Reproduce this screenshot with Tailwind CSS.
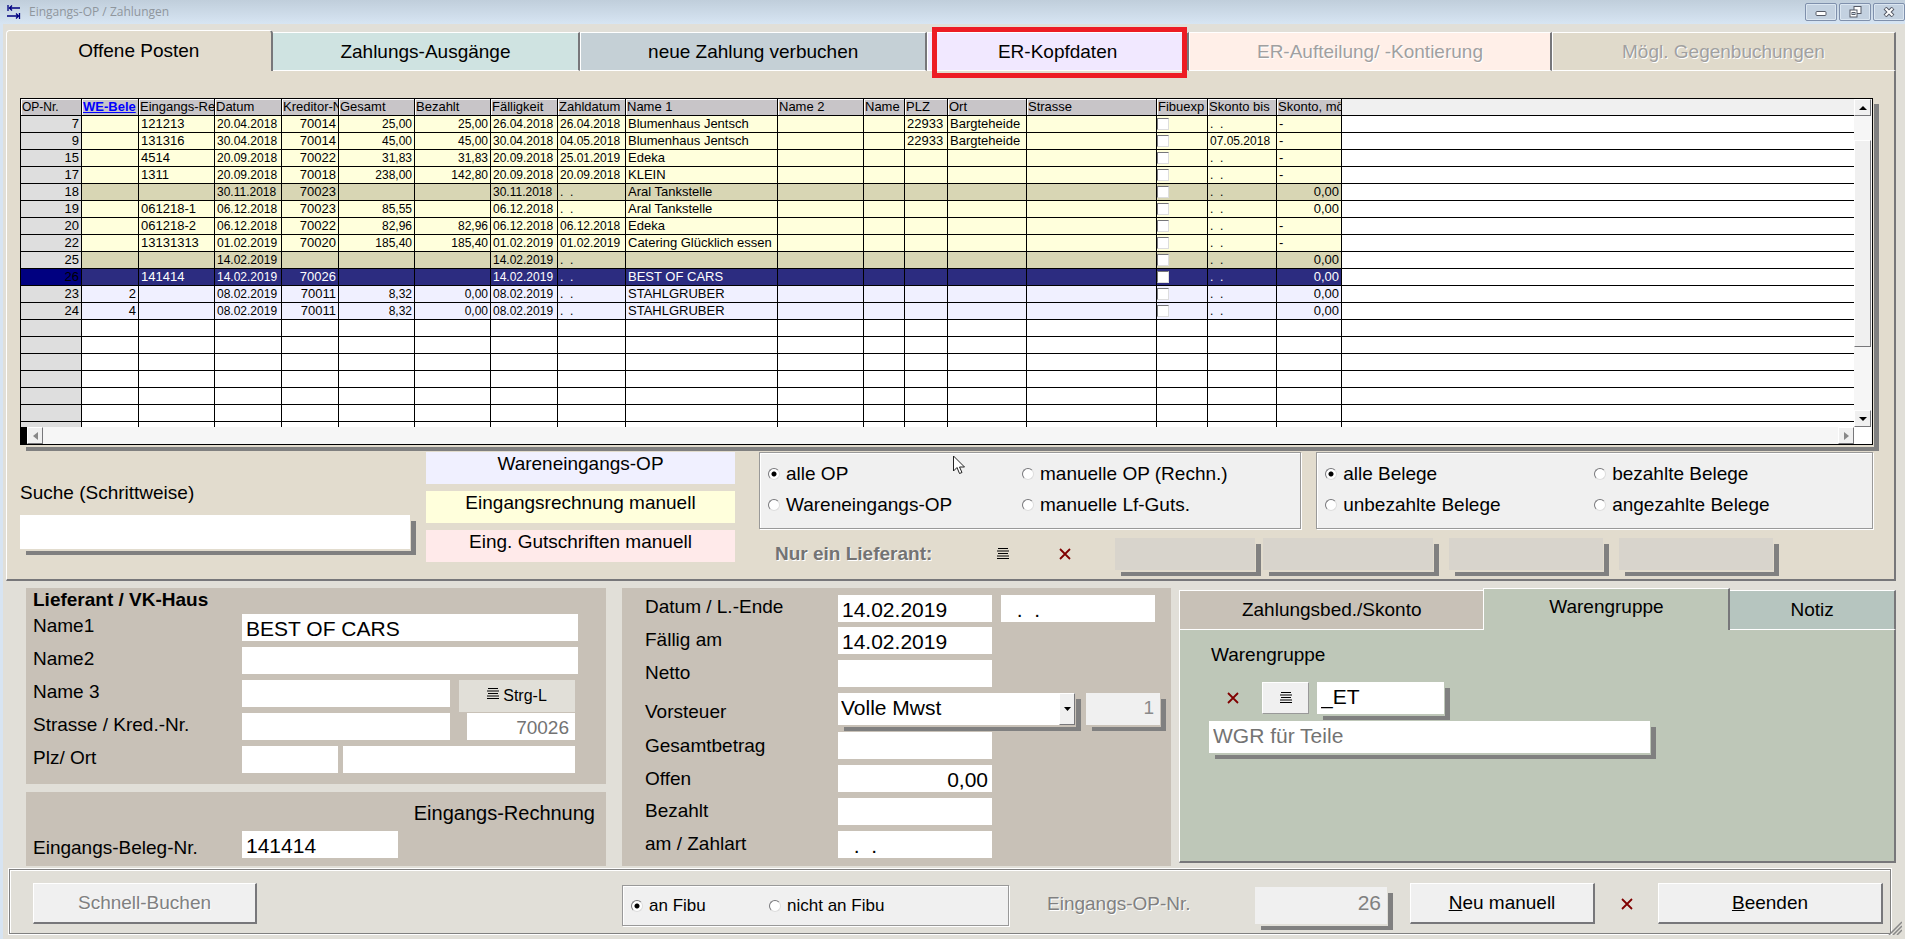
<!DOCTYPE html>
<html lang="de">
<head>
<meta charset="utf-8">
<title>Eingangs-OP / Zahlungen</title>
<script src="https://cdn.jsdelivr.net/npm/@tailwindcss/browser@4"></script>
</head>
<body class="min-h-screen bg-[#d7e4f2] font-['Liberation_Sans',Arial,sans-serif] text-black text-[19px] leading-6 flex flex-col">
<svg class="hidden" aria-hidden="true">
  <symbol id="list" viewBox="0 0 12 12"><path d="M1 .5h10M0 3h12M1 5.500h10M0 8h12M0 10.500h12" stroke="#000" stroke-width="1.200"/></symbol>
  <symbol id="cross" viewBox="0 0 12 12"><path d="M1 1l10 10M11 1L1 11" stroke="#800000" stroke-width="1.800" fill="none"/></symbol>
</svg>

<header class="h-6 shrink-0 flex items-center bg-linear-to-b from-[#c0cedb] to-[#d7e5f3] pl-[7px]">
  <svg class="w-3.5 h-4" viewBox="0 0 14 16" fill="none" stroke="#000080" stroke-width="1.300"><path d="M1 1v6M2 4h11M5 1.500L2.500 4 5 6.500M12.500 9v6M0 12h11M9 9.500L11.500 12 9 14.500"/></svg>
  <h1 class="ml-2 text-xs leading-4 font-['Open_Sans','Noto_Sans',sans-serif] text-[#8f969d] flex-1">Eingangs-OP / Zahlungen</h1>
  <div class="flex gap-[2px]">
    <button aria-label="Minimieren" class="w-8 h-[18px] border border-[#7f90ac] rounded-xs bg-[#c3d1e0] shadow-[inset_0_0_0_1px_#dbe6f1] flex items-center justify-center"><svg width="12" height="12" viewBox="0 0 12 12"><rect x="1" y="5.500" width="10" height="4" rx="1" fill="#fff" stroke="#555a66"/></svg></button>
    <button aria-label="Wiederherstellen" class="w-8 h-[18px] border border-[#7f90ac] rounded-xs bg-[#c3d1e0] shadow-[inset_0_0_0_1px_#dbe6f1] flex items-center justify-center"><svg width="13" height="12" viewBox="0 0 13 12"><rect x="5" y=".5" width="7" height="7" fill="#fff" stroke="#555a66"/><rect x="1" y="4" width="7" height="7" fill="#fff" stroke="#555a66"/><rect x="3" y="6.500" width="3" height="2" fill="#c3d1e0" stroke="#555a66"/></svg></button>
    <button aria-label="Schließen" class="w-8 h-[18px] border border-[#7f90ac] rounded-xs bg-[#c3d1e0] shadow-[inset_0_0_0_1px_#dbe6f1] flex items-center justify-center"><svg width="12" height="10" viewBox="0 0 12 10"><path d="M2 1l8 8M10 1L2 9" stroke="#555a66" stroke-width="4"/><path d="M2.500 1.500l7 7M9.500 1.500l-7 7" stroke="#fff" stroke-width="2"/></svg></button>
  </div>
</header>

<main class="ml-[3px] flex-1 bg-[#e1dfd8] flex flex-col">
  <nav class="mt-1.5 ml-[3px] mr-[9px] h-[41px] flex items-end">
    <button class="flex-[266] h-[41px] rounded-t-sm border-t border-l border-white border-r-2 border-r-[#77777a] bg-[#e2dcce] pb-px">Offene Posten</button>
    <button class="flex-[308] h-[39px] border-y border-white border-r-2 border-r-[#77777a] bg-[#cfe3e1]">Zahlungs-Ausgänge</button>
    <button class="flex-[347] h-[39px] border-y border-l border-white border-r-2 border-r-[#77777a] bg-[#c5d0d6]">neue Zahlung verbuchen</button>
    <button class="relative flex-[261] h-[39px] border-y border-l border-white border-r-2 border-r-[#77777a] bg-[#f1e8ff]">ER-Kopfdaten<span class="absolute z-10 left-1 right-0 -top-1.5 -bottom-2 border-[5px] border-[#ed1c24]"></span></button>
    <button disabled class="flex-[363] h-[39px] border-y border-l border-white border-r-2 border-r-[#77777a] bg-[#ffefe8] text-[#a0a0a0] [text-shadow:1px_1px_0_#fff]">ER-Aufteilung/ -Kontierung</button>
    <button disabled class="flex-[344] h-[39px] border-y border-l border-white border-r-2 border-r-[#77777a] bg-[#e0dacb] text-[#a0a0a0] [text-shadow:1px_1px_0_#fff]">Mögl. Gegenbuchungen</button>
  </nav>

  <section class="ml-[3px] mr-[9px] pt-[27px] pl-[13px] pr-[21px] pb-[9px] bg-[#e2dcce] border-l border-l-white border-r-2 border-r-[#77777a] border-b-2 border-b-[#77777a]">
    <div class="border border-black bg-white flex shadow-[1px_2px_0_#e2dcce,6px_6px_0_#808080]">
      <div class="flex-1 min-w-0">
        <div class="h-[328px] overflow-hidden">
          <table class="w-full table-fixed border-separate border-spacing-0 text-[13px] leading-4">
            <colgroup id="cols"></colgroup>
            <thead><tr id="head"></tr></thead>
            <tbody id="rows"></tbody>
          </table>
        </div>
        <div class="h-[17px] flex justify-between bg-[#f6f6f6]">
          <button aria-label="Nach links" class="border-l-[6px] border-l-black w-[22px] flex"><span class="flex-1 h-[17px] bg-[#f0f0f0] border border-white border-r-[#77777a] border-b-[#77777a] flex items-center justify-center"><svg width="5" height="8"><path d="M5 0v8L0 4z" fill="#888"/></svg></span></button>
          <button aria-label="Nach rechts" class="w-4 bg-[#f0f0f0] border border-white border-r-[#77777a] border-b-[#77777a] flex items-center justify-center"><svg width="5" height="8"><path d="M0 0v8l5-4z" fill="#888"/></svg></button>
        </div>
      </div>
      <div class="w-[18px] pr-px flex flex-col bg-[#f6f6f6]">
        <button aria-label="Nach oben" class="h-[17px] bg-[#f0f0f0] border border-white border-r-[#77777a] border-b-[#77777a] flex items-center justify-center"><svg width="8" height="4"><path d="M0 4h8L4 0z"/></svg></button>
        <div class="h-6"></div>
        <div class="flex-[208] bg-[#f0f0f0] border border-white border-r-[#77777a] border-b-[#77777a]"></div>
        <div class="flex-[64]"></div>
        <button aria-label="Nach unten" class="h-[17px] bg-[#f0f0f0] border border-white border-r-[#77777a] border-b-[#77777a] flex items-center justify-center"><svg width="8" height="4"><path d="M0 0h8L4 4z"/></svg></button>
        <div class="h-[17px] bg-white"></div>
      </div>
    </div>

    <div class="mt-[7px] flex">
      <div class="w-[390px] pt-[29px]">
        <label for="suche" class="block">Suche (Schrittweise)</label>
        <input id="suche" class="mt-2.5 block w-full h-[34px] bg-white px-1 text-[21px] shadow-[1px_2px_0_#e2dcce,6px_6px_0_#808080]">
      </div>
      <div class="ml-4 w-[309px] flex flex-col gap-[7px] text-center">
        <div class="h-8 bg-[#f0f0ff]">Wareneingangs-OP</div>
        <div class="h-8 bg-[#ffffdc]">Eingangsrechnung manuell</div>
        <div class="h-8 bg-[#ffeaea]">Eing. Gutschriften manuell</div>
      </div>
      <div class="ml-6 flex-1 relative">
        <div class="flex gap-[15px]">
          <fieldset class="flex-[542] h-[77px] pt-[5px] pl-2 border border-[#999] bg-[#f0f0f0] shadow-[1px_1px_0_#fff,inset_1px_1px_0_#fff] grid grid-cols-[254px_1fr] auto-rows-[31px]">
            <label class="flex items-center gap-1.5"><input type="radio" name="op" checked class="appearance-none size-3 rounded-full bg-white border border-[#77777a] border-r-[#ddd] border-b-[#ddd] checked:bg-[radial-gradient(circle,#000_2px,#fff_3px)]">alle OP</label>
            <label class="flex items-center gap-1.5"><input type="radio" name="op" class="appearance-none size-3 rounded-full bg-white border border-[#77777a] border-r-[#ddd] border-b-[#ddd] checked:bg-[radial-gradient(circle,#000_2px,#fff_3px)]">manuelle OP (Rechn.)</label>
            <label class="flex items-center gap-1.5"><input type="radio" name="op" class="appearance-none size-3 rounded-full bg-white border border-[#77777a] border-r-[#ddd] border-b-[#ddd] checked:bg-[radial-gradient(circle,#000_2px,#fff_3px)]">Wareneingangs-OP</label>
            <label class="flex items-center gap-1.5"><input type="radio" name="op" class="appearance-none size-3 rounded-full bg-white border border-[#77777a] border-r-[#ddd] border-b-[#ddd] checked:bg-[radial-gradient(circle,#000_2px,#fff_3px)]">manuelle Lf-Guts.</label>
          </fieldset>
          <fieldset class="flex-[557] h-[77px] pt-[5px] pl-2 border border-[#999] bg-[#f0f0f0] shadow-[1px_1px_0_#fff,inset_1px_1px_0_#fff] grid grid-cols-[269px_1fr] auto-rows-[31px]">
            <label class="flex items-center gap-1.5"><input type="radio" name="belege" checked class="appearance-none size-3 rounded-full bg-white border border-[#77777a] border-r-[#ddd] border-b-[#ddd] checked:bg-[radial-gradient(circle,#000_2px,#fff_3px)]">alle Belege</label>
            <label class="flex items-center gap-1.5"><input type="radio" name="belege" class="appearance-none size-3 rounded-full bg-white border border-[#77777a] border-r-[#ddd] border-b-[#ddd] checked:bg-[radial-gradient(circle,#000_2px,#fff_3px)]">bezahlte Belege</label>
            <label class="flex items-center gap-1.5"><input type="radio" name="belege" class="appearance-none size-3 rounded-full bg-white border border-[#77777a] border-r-[#ddd] border-b-[#ddd] checked:bg-[radial-gradient(circle,#000_2px,#fff_3px)]">unbezahlte Belege</label>
            <label class="flex items-center gap-1.5"><input type="radio" name="belege" class="appearance-none size-3 rounded-full bg-white border border-[#77777a] border-r-[#ddd] border-b-[#ddd] checked:bg-[radial-gradient(circle,#000_2px,#fff_3px)]">angezahlte Belege</label>
          </fieldset>
        </div>
        <svg class="absolute left-[194px] top-[3px] w-3 h-5" viewBox="0 0 12 20"><path d="M.5 1v15l3.500-3.500 2.500 6 2.500-1-2.500-5.500h5z" fill="#fff" stroke="#222"/></svg>
        <div class="mt-[9px] ml-4 flex items-center h-8">
          <span class="w-[213px] font-bold text-[#737373] [text-shadow:1px_1px_0_#fff]">Nur ein Lieferant:</span>
          <button aria-label="Lieferant wählen" class="w-[30px] h-8 flex items-center justify-center"><svg class="size-3"><use href="#list"/></svg></button>
          <button aria-label="Lieferant löschen" class="ml-8 w-[30px] h-8 flex items-center justify-center"><svg class="size-3"><use href="#cross"/></svg></button>
          <input aria-label="Lieferant 1" disabled class="ml-[35px] w-[140px] h-8 bg-[#d8d4cc] shadow-[1px_2px_0_#e2dcce,6px_6px_0_#808080]">
          <input aria-label="Lieferant 2" disabled class="ml-2 w-[170px] h-8 bg-[#d8d4cc] shadow-[1px_2px_0_#e2dcce,6px_6px_0_#808080]">
          <input aria-label="Lieferant 3" disabled class="ml-4 w-[154px] h-8 bg-[#d8d4cc] shadow-[1px_2px_0_#e2dcce,6px_6px_0_#808080]">
          <input aria-label="Lieferant 4" disabled class="ml-4 w-[154px] h-8 bg-[#d8d4cc] shadow-[1px_2px_0_#e2dcce,6px_6px_0_#808080]">
        </div>
      </div>
    </div>
  </section>

  <div class="pt-[7px] pl-[23px] pr-[9px] flex">
    <div class="w-[580px] flex flex-col">
      <section class="h-[196px] bg-[#c8c1b7] pl-[7px]">
        <h2 class="font-bold h-[26px] leading-6">Lieferant / VK-Haus</h2>
        <div class="grid grid-cols-[209px_1fr] auto-rows-[33px]">
          <label for="n1">Name1</label>
          <input id="n1" value="BEST OF CARS" class="w-[336px] h-[27px] pt-0.5 bg-white px-1 text-[21px]">
          <label for="n2">Name2</label>
          <input id="n2" class="w-[336px] h-[27px] bg-white px-1 text-[21px]">
          <label for="n3">Name 3</label>
          <div class="flex"><input id="n3" class="w-[208px] h-[27px] bg-white px-1 text-[21px]"><button class="ml-[9px] w-[116px] h-8 bg-[#e1dfd8] text-base flex items-center justify-center gap-1"><svg class="size-3 mb-1"><use href="#list"/></svg>Strg-L</button></div>
          <label for="st">Strasse / Kred.-Nr.</label>
          <div class="flex"><input id="st" class="w-[208px] h-[27px] bg-white px-1 text-[21px]"><input aria-label="Kreditor-Nr." value="70026" readonly class="ml-[17px] w-[108px] h-[27px] pt-0.5 bg-white px-1.5 text-right text-[#737373]"></div>
          <label for="plz">Plz/ Ort</label>
          <div class="flex"><input id="plz" class="w-24 h-[27px] bg-white px-1 text-[21px]"><input aria-label="Ort" class="ml-[5px] w-[232px] h-[27px] bg-white px-1 text-[21px]"></div>
        </div>
      </section>
      <section class="mt-2 flex-1 bg-[#c8c1b7] pl-[7px]">
        <h2 class="pt-[9px] pr-[11px] text-right text-xl leading-6 h-[39px]">Eingangs-Rechnung</h2>
        <div class="grid grid-cols-[209px_1fr]">
          <label for="bn" class="pt-[5px]">Eingangs-Beleg-Nr.</label>
          <input id="bn" value="141414" class="w-[156px] h-[27px] pt-0.5 bg-white px-1 text-[21px]">
        </div>
      </section>
    </div>

    <section class="ml-4 w-[549px] h-[278px] bg-[#c8c1b7] pt-[7px] pl-[23px] grid grid-cols-[193px_1fr] grid-rows-[32px_33px_33px_39px_33px_33px_33px_33px]">
      <label for="dat">Datum / L.-Ende</label>
      <div class="flex gap-[9px]"><input id="dat" value="14.02.2019" class="w-[154px] h-[27px] pt-0.5 bg-white px-1 text-[21px]"><input aria-label="Leistungsende" value="  .  ." class="w-[154px] h-[27px] pt-0.5 bg-white px-1 text-[21px]"></div>
      <label for="fal" class="pt-px">Fällig am</label>
      <input id="fal" value="14.02.2019" class="w-[154px] h-[27px] pt-0.5 bg-white px-1 text-[21px]">
      <label for="net" class="pt-px">Netto</label>
      <input id="net" class="w-[154px] h-[27px] bg-white px-1 text-[21px]">
      <label for="vor" class="pt-[7px]">Vorsteuer</label>
      <div class="flex">
        <div class="relative w-[237px] h-8 shadow-[1px_2px_0_#c8c1b7,6px_6px_0_#808080]">
          <select id="vor" class="appearance-none block w-full h-8 bg-white pl-[3px] pb-0.5 text-[21px]"><option>Volle Mwst</option></select>
          <span class="pointer-events-none absolute right-0 top-0 w-4 h-8 bg-[#f0f0f0] border border-white border-r-[#77777a] border-b-[#77777a] flex items-center justify-center"><svg width="7" height="4"><path d="M0 0h7L3.500 4z"/></svg></span>
        </div>
        <input aria-label="Steuerschlüssel" value="1" readonly class="ml-[11px] w-[74px] h-8 bg-[#f0f0f0] px-1.5 pb-0.5 text-right text-[#8a8a8a] shadow-[1px_2px_0_#c8c1b7,6px_6px_0_#808080]">
      </div>
      <label for="ges" class="pt-0.5">Gesamtbetrag</label>
      <input id="ges" class="relative w-[154px] h-[27px] bg-white px-1 text-[21px]">
      <label for="off" class="pt-0.5">Offen</label>
      <input id="off" value="0,00" class="w-[154px] h-[27px] pt-0.5 bg-white px-1 text-[21px] text-right">
      <label for="bez" class="pt-px">Bezahlt</label>
      <input id="bez" class="w-[154px] h-[27px] bg-white px-1 text-[21px]">
      <label for="zah" class="pt-px">am / Zahlart</label>
      <input id="zah" value="  .  ." class="w-[154px] h-[27px] pt-0.5 bg-white px-1 text-[21px]">
    </section>

    <section class="ml-2 flex-1 h-[275px] flex flex-col">
      <nav class="h-[42px] flex items-end">
        <button class="flex-[306] h-10 border border-white border-r-0 bg-[#c8c1b7]">Zahlungsbed./Skonto</button>
        <button class="flex-[246] h-[42px] border-t border-l border-white border-r-2 border-r-[#77777a] bg-[#bec7b8] pb-1.5">Warengruppe</button>
        <button class="flex-[165] h-10 border-y border-white border-r-2 border-r-[#77777a] bg-[#b6c5bf]">Notiz</button>
      </nav>
      <div class="flex-1 bg-[#bec7b8] border-l border-l-white border-r-2 border-r-[#77777a] border-b-2 border-b-[#77777a] pt-[13px] pl-[29px]">
        <label for="wg" class="block ml-0.5">Warengruppe</label>
        <div class="mt-[15px] flex items-center">
          <button aria-label="Warengruppe löschen" class="w-[47px] h-8 flex items-center justify-center"><svg class="size-3"><use href="#cross"/></svg></button>
          <button aria-label="Warengruppe wählen" class="ml-[6px] w-[47px] h-8 bg-[#f0f0f0] border border-white border-r-[#999] border-b-[#999] flex items-center justify-center"><svg class="size-3"><use href="#list"/></svg></button>
          <input id="wg" value="_ET" class="ml-2 w-[127px] h-8 bg-white px-1 pb-0.5 text-[21px] shadow-[1px_2px_0_#bec7b8,6px_6px_0_#808080]">
        </div>
        <input aria-label="Bezeichnung der Warengruppe" value="WGR für Teile" readonly class="relative mt-[7px] block w-[441px] h-8 bg-white px-1 pb-0.5 text-[21px] text-[#737373] shadow-[1px_2px_0_#bec7b8,6px_6px_0_#808080]">
      </div>
    </section>
  </div>

  <footer class="relative ml-1.5 mr-3.5 mt-[3px] mb-[5px] h-[65px] border border-[#808080] shadow-[0_0_0_1px_#fff,inset_1px_1px_0_#fff] pl-[23px] pr-[7px] pt-[13px] flex">
    <button disabled class="w-[224px] h-[41px] bg-[#f0f0f0] border border-t-white border-l-white border-r-2 border-b-2 border-r-[#77777a] border-b-[#77777a] text-[#808080] [text-shadow:1px_1px_0_#fff]">Schnell-Buchen</button>
    <fieldset class="ml-[365px] mt-0.5 w-[387px] h-[41px] border border-[#999] bg-[#f0f0f0] shadow-[1px_1px_0_#fff,inset_1px_1px_0_#fff] pl-2 flex items-center text-[17px]">
      <label class="w-[138px] flex items-center gap-1.5"><input type="radio" name="fibu" checked class="appearance-none size-3 rounded-full bg-white border border-[#77777a] border-r-[#ddd] border-b-[#ddd] checked:bg-[radial-gradient(circle,#000_2px,#fff_3px)]">an Fibu</label>
      <label class="flex items-center gap-1.5"><input type="radio" name="fibu" class="appearance-none size-3 rounded-full bg-white border border-[#77777a] border-r-[#ddd] border-b-[#ddd] checked:bg-[radial-gradient(circle,#000_2px,#fff_3px)]">nicht an Fibu</label>
    </fieldset>
    <label for="opnr" class="ml-[38px] mt-[9px] flex-1 text-[#808080] [text-shadow:1px_1px_0_#fff]">Eingangs-OP-Nr.</label>
    <input id="opnr" value="26" readonly class="mt-1 w-[132px] h-[37px] pb-1.5 bg-[#f0f0f0] px-1.5 text-right text-[21px] text-[#808080] shadow-[1px_2px_0_#e1dfd8,6px_6px_0_#808080]">
    <button class="ml-[23px] w-[185px] h-[41px] bg-[#f0f0f0] border border-t-white border-l-white border-r-2 border-b-2 border-r-[#77777a] border-b-[#77777a]"><u>N</u>eu manuell</button>
    <button aria-label="Löschen" class="w-[63px] h-[41px] flex items-center justify-center"><svg class="size-3"><use href="#cross"/></svg></button>
    <button class="w-[225px] h-[41px] bg-[#f0f0f0] border border-t-white border-l-white border-r-2 border-b-2 border-r-[#77777a] border-b-[#77777a]"><u>B</u>eenden</button>
    <svg class="absolute -right-3 -bottom-0.5 w-3.5 h-3.5" viewBox="0 0 14 14" stroke="#888" stroke-width="1.500"><path d="M1 14L14 1M5 14l9-9M9 14l5-5"/></svg>
  </footer>
</main>

<script>
// label, column width
const columns = [['OP-Nr.',61],['WE-Bele',57],['Eingangs-Re',76],['Datum',67],['Kreditor-N',57],['Gesamt',76],['Bezahlt',76],['Fälligkeit',67],['Zahldatum',68],['Name 1',152],['Name 2',86],['Name',41],['PLZ',43],['Ort',79],['Strasse',130],['Fibuexp',51],['Skonto bis',69],['Skonto, mö',65]];
const data = [
 ['y','7','','121213','20.04.2018','70014','25,00','25,00','26.04.2018','26.04.2018','Blumenhaus Jentsch','','','22933','Bargteheide','','c','.  .','-'],
 ['y','9','','131316','30.04.2018','70014','45,00','45,00','30.04.2018','04.05.2018','Blumenhaus Jentsch','','','22933','Bargteheide','','c','07.05.2018','-'],
 ['y','15','','4514','20.09.2018','70022','31,83','31,83','20.09.2018','25.01.2019','Edeka','','','','','','c','.  .','-'],
 ['y','17','','1311','20.09.2018','70018','238,00','142,80','20.09.2018','20.09.2018','KLEIN','','','','','','c','.  .','-'],
 ['o','18','','','30.11.2018','70023','','','30.11.2018','.  .','Aral Tankstelle','','','','','','c','.  .','0,00'],
 ['y','19','','061218-1','06.12.2018','70023','85,55','','06.12.2018','.  .','Aral Tankstelle','','','','','','c','.  .','0,00'],
 ['y','20','','061218-2','06.12.2018','70022','82,96','82,96','06.12.2018','06.12.2018','Edeka','','','','','','c','.  .','-'],
 ['y','22','','13131313','01.02.2019','70020','185,40','185,40','01.02.2019','01.02.2019','Catering Glücklich essen','','','','','','c','.  .','-'],
 ['o','25','','','14.02.2019','','','','14.02.2019','.  .','','','','','','','c','.  .','0,00'],
 ['s','26','','141414','14.02.2019','70026','','','14.02.2019','.  .','BEST OF CARS','','','','','','c','.  .','0,00'],
 ['l','23','2','','08.02.2019','70011','8,32','0,00','08.02.2019','.  .','STAHLGRUBER','','','','','','c','.  .','0,00'],
 ['l','24','4','','08.02.2019','70011','8,32','0,00','08.02.2019','.  .','STAHLGRUBER','','','','','','c','.  .','0,00']];
for (let i = 0; i < 7; i++) data.push(['w', ...Array(18).fill('')]);
const tone = {y:'bg-[#ffffdc]', o:'bg-[#d8d6b4]', s:'bg-[#2c2c80] text-white', l:'bg-[#f0f0ff]', w:'bg-white'};
const right = [0,1,4,5,6], small = [3,5,6,7,8,16];
document.getElementById('cols').innerHTML = columns.map(c => `<col style="width:${c[1]}px">`).join('') + '<col>';
document.getElementById('head').innerHTML = columns.map((c, i) =>
  `<th class="h-[17px] p-0 pl-px border-r border-b border-black bg-[#c8c5c8] shadow-[inset_1px_1px_0_#fff] text-left whitespace-nowrap overflow-hidden ${i === 1 ? 'font-bold text-[#0000ff] underline' : 'font-normal'} ${i === 0 ? 'text-xs' : ''}">${c[0]}</th>`).join('') +
  '<td class="h-[17px] p-0 border-b border-black bg-[#f0f0f0]"></td>';
document.getElementById('rows').innerHTML = data.map(r => `<tr class="${tone[r[0]]}">` + r.slice(1).map((v, i) => {
  const content = v === 'c' ? '<input type="checkbox" aria-label="Fibuexport" class="appearance-none block size-3 bg-white border border-[#77777a] border-r-[#ddd] border-b-[#ddd]">' : v;
  const alignRight = right.includes(i) || (i === 17 && v !== '-');
  const first = i === 0 ? (r[0] === 's' ? 'bg-[#000080] text-black' : 'bg-[#dedede]') : '';
  return `<td class="h-[17px] p-0 ${v === 'c' ? '' : 'px-0.5'} border-r border-b border-black whitespace-pre overflow-hidden ${alignRight ? 'text-right' : ''} ${small.includes(i) ? 'text-xs leading-4' : ''} ${first}">${content}</td>`;
}).join('') + '<td class="p-0 border-b border-black bg-white"></td></tr>').join('');
</script>
</body>
</html>
